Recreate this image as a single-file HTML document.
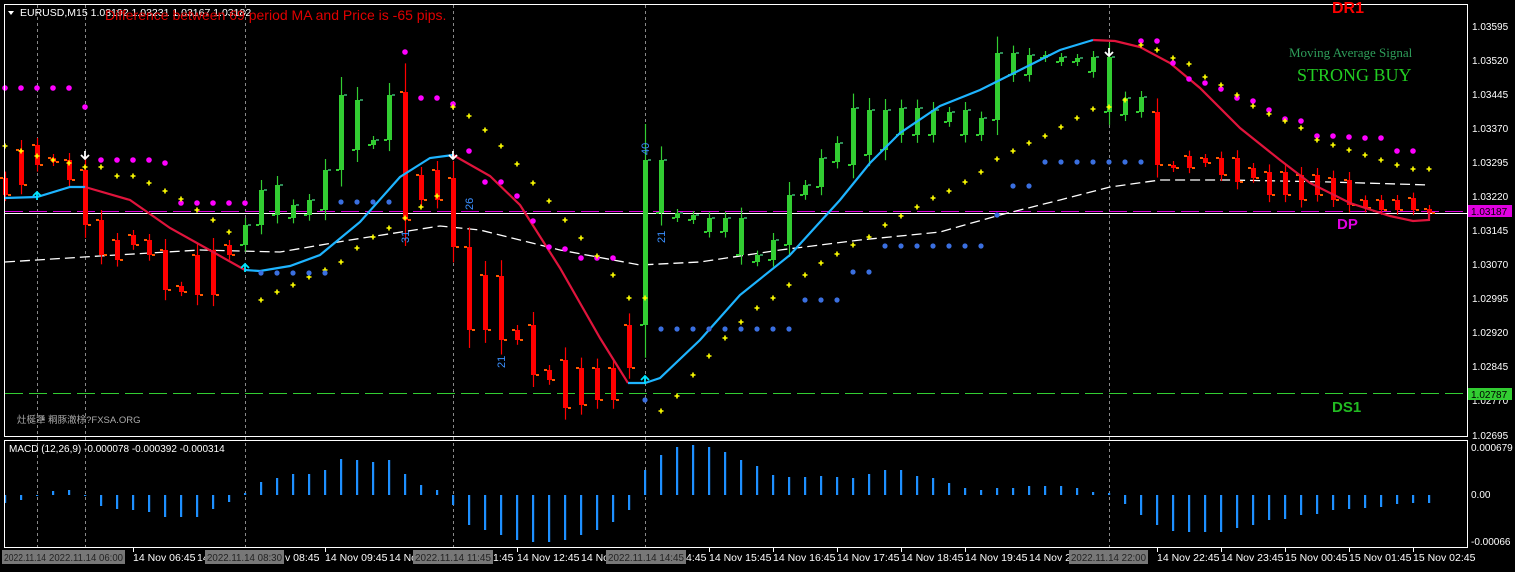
<!DOCTYPE html>
<html><head><meta charset="utf-8"><style>
html,body{margin:0;padding:0;background:#000;width:1515px;height:572px;overflow:hidden}
svg{display:block}
text{font-family:"Liberation Sans","Noto Sans CJK SC",sans-serif}
</style></head><body>
<svg id="s" width="1515" height="572" xmlns="http://www.w3.org/2000/svg">
<rect width="1515" height="572" fill="#000"/>
<g id="g"></g>
<rect x="4.5" y="4.5" width="1463" height="432" fill="none" stroke="#fff"/>
<rect x="4.5" y="440.5" width="1463" height="107" fill="none" stroke="#fff"/>
<g font-size="10" fill="#fff">
<text x="1472" y="30">1.03595</text><text x="1472" y="64">1.03520</text><text x="1472" y="98">1.03445</text>
<text x="1472" y="132">1.03370</text><text x="1472" y="166">1.03295</text><text x="1472" y="200">1.03220</text>
<text x="1472" y="234">1.03145</text><text x="1472" y="268">1.03070</text><text x="1472" y="302">1.02995</text>
<text x="1472" y="336">1.02920</text><text x="1472" y="370">1.02845</text><text x="1472" y="404">1.02770</text>
<text x="1472" y="439">1.02695</text>
<text x="1471" y="451">0.000679</text><text x="1471" y="498">0.00</text><text x="1471" y="545">-0.00066</text>
</g>
<rect x="1468" y="205" width="44" height="12" fill="#e000e0"/><text x="1471" y="215" font-size="10" fill="#000">1.03187</text>
<rect x="1468" y="388" width="44" height="12" fill="#32cd32"/><text x="1471" y="398" font-size="10" fill="#000">1.02787</text>
<path d="M8 11 L14 11 L11 15Z" fill="#fff"/>
<text x="20" y="16" font-size="10.5" fill="#fff">EURUSD,M15  1.03192 1.03231 1.03167 1.03182</text>
<text x="105" y="20" font-size="14" fill="#e00000">Difference between 69 period MA and Price is -65 pips.</text>
<text x="1289" y="57" font-size="13" fill="#2e9e5a" style="font-family:'Liberation Serif',serif">Moving Average Signal</text>
<text x="1297" y="81" font-size="18" fill="#22cc22" style="font-family:'Liberation Serif',serif">STRONG BUY</text>
<text x="1332" y="13" font-size="16" font-weight="bold" fill="#ff0000">DR1</text>
<text x="1337" y="229" font-size="15" font-weight="bold" fill="#e000e0">DP</text>
<text x="1332" y="412" font-size="15" font-weight="bold" fill="#22bb22">DS1</text>
<text x="17" y="423" font-size="9.5" fill="#aaa">灶梴犟 粡豚澈梌?FXSA.ORG</text>
<text x="9" y="452" font-size="10" fill="#fff">MACD (12,26,9) -0.000078 -0.000392 -0.000314</text>
<g font-size="11" fill="#3a8fff">
<text transform="translate(649,155) rotate(-90)">40</text>
<text transform="translate(665,243) rotate(-90)">21</text>
<text transform="translate(473,210) rotate(-90)">26</text>
<text transform="translate(505,368) rotate(-90)">21</text>
<text transform="translate(409,243) rotate(-90)">31</text>
</g>
<g id="ax" font-size="10.5" fill="#fff"></g>
</svg>
<script>
var NS="http://www.w3.org/2000/svg",g=document.getElementById('g');
function el(t,a,p){var e=document.createElementNS(NS,t);for(var k in a)e.setAttribute(k,a[k]);(p||g).appendChild(e);return e;}
function X(i){return 5+16*i;}
[37,85,245,453,645,1109].forEach(function(x){el('line',{x1:x+.5,y1:5,x2:x+.5,y2:548,stroke:'#888','stroke-dasharray':'3,3'});});
el('line',{x1:5,y1:211.5,x2:1467,y2:211.5,stroke:'#e000e0','stroke-dasharray':'18,6'});
el('line',{x1:5,y1:213.5,x2:1467,y2:213.5,stroke:'#fff'});
el('line',{x1:5,y1:393.5,x2:1467,y2:393.5,stroke:'#32cd32','stroke-dasharray':'18,6'});
el('polyline',{points:"5,262 100,256 200,250 280,252 350,240 440,226 480,230 560,250 640,265 700,262 780,250 860,240 940,232 1000,215 1060,200 1110,187 1160,180 1230,180 1330,182 1430,185",fill:'none',stroke:'#fff','stroke-width':1.3,'stroke-dasharray':'10,5'});
var C=[[178,195,'r'],[150,185,'r'],[145,165,'r'],[158,162,'r'],[160,180,'r'],[170,225,'r'],[220,255,'r'],[240,260,'r'],[235,245,'r'],[240,255,'r'],[250,290,'r'],[286,292,'r'],[255,295,'r'],[250,295,'r'],[245,255,'r'],[245,225,'g'],[225,190,'g'],[215,185,'g'],[218,205,'g'],[215,200,'g'],[210,170,'g'],[170,95,'g'],[150,100,'g'],[145,140,'g'],[140,95,'g'],[92,220,'r'],[175,200,'r'],[170,200,'r'],[178,247,'r'],[247,330,'r'],[275,330,'r'],[276,340,'r'],[330,340,'r'],[325,375,'r'],[370,380,'r'],[360,408,'r'],[368,405,'r'],[368,400,'r'],[368,400,'r'],[325,368,'r'],[325,160,'g'],[213,160,'g'],[218,213,'g'],[220,215,'g'],[232,218,'g'],[232,218,'g'],[255,218,'g'],[262,255,'g'],[260,240,'g'],[245,195,'g'],[195,185,'g'],[187,158,'g'],[162,143,'g'],[165,108,'g'],[155,110,'g'],[150,110,'g'],[135,108,'g'],[135,108,'g'],[135,110,'g'],[122,112,'g'],[135,110,'g'],[135,118,'g'],[120,53,'g'],[75,53,'g'],[75,55,'g'],[58,55,'g'],[62,57,'g'],[62,58,'g'],[72,57,'g'],[112,57,'g'],[115,98,'g'],[112,97,'g'],[112,165,'r'],[165,168,'r'],[156,168,'r'],[158,163,'r'],[158,175,'r'],[158,182,'r'],[168,178,'r'],[172,195,'r'],[172,195,'r'],[175,200,'r'],[175,195,'r'],[178,200,'r'],[180,205,'r'],[200,208,'r'],[200,210,'r'],[200,210,'r'],[198,210,'r'],[209,213,'r']];
C.forEach(function(c,i){var x=X(i),t=Math.min(c[0],c[1]),b=Math.max(c[0],c[1]),col=c[2]=='r'?'#ff0000':'#32cd32';
 var w1=Math.max(4,(b-t)*0.2+3),w2=Math.max(4,(b-t)*0.18+3);
 el('line',{x1:x+.5,y1:t-w1,x2:x+.5,y2:b+w2,stroke:col,'stroke-width':1.2});
 el('rect',{x:x-2,y:t,width:5,height:Math.max(2,b-t),fill:col});
 el('rect',{x:x-5,y:c[0]-1,width:3,height:2,fill:c[2]=='r'?'#ff5a00':'#32cd32'});
 el('rect',{x:x+3,y:c[1]-1,width:3,height:2,fill:c[2]=='r'?'#ff5a00':'#2e8b57'});
});
function pl(p,col){el('polyline',{points:p,fill:'none',stroke:col,'stroke-width':2.2});}
pl("5,198 37,197 70,187 85,187",'#1eb4ff');
pl("85,187 130,200 170,228 213,252 245,270",'#e0143c');
pl("245,270 260,271 290,266 320,255 360,222 400,177 430,158 453,155",'#1eb4ff');
pl("453,155 490,176 520,205 560,268 600,338 628,383",'#e0143c');
pl("628,383 645,383 660,378 700,340 740,295 790,255 840,200 870,163 900,133 940,106 980,90 1020,70 1060,50 1093,40",'#1eb4ff');
pl("1093,40 1115,41 1140,47 1170,63 1200,88 1240,128 1280,160 1310,183 1350,203 1390,216 1413,221 1429,220 1429,211",'#e0143c');
function dots(arr,col,r){arr.forEach(function(d){el('circle',{cx:d[0],cy:d[1],r:r,fill:col});});}
dots([[5,88],[21,88],[37,88],[53,88],[69,88],[85,107],[101,160],[117,160],[133,160],[149,160],[165,163],[181,203],[197,203],[213,203],[229,203],[245,203],[405,52],[421,98],[437,98],[453,104],[469,151],[485,182],[501,182],[517,196],[533,221],[549,247],[565,249],[581,258],[597,258],[613,258],[1141,41],[1157,41],[1173,63],[1189,79],[1205,83],[1221,89],[1237,98],[1253,101],[1269,110],[1285,119],[1301,121],[1317,136],[1333,136],[1349,137],[1365,138],[1381,138],[1397,151],[1413,151]],'#ff00ff',2.8);
var Y=[[5,146],[21,151],[37,156],[53,160],[69,163],[85,167],[101,167],[117,176],[133,176],[149,183],[165,191],[181,199],[197,210],[213,220],[229,232],[261,300],[277,292],[293,285],[309,277],[325,270],[341,262],[357,248],[373,237],[389,228],[405,218],[421,207],[437,196],[453,107],[469,116],[485,130],[501,146],[517,164],[533,183],[549,201],[565,220],[581,238],[597,256],[613,275],[629,298],[645,298],[661,411],[677,396],[693,375],[709,356],[725,338],[741,322],[757,308],[773,298],[789,285],[805,275],[821,263],[837,254],[853,245],[869,237],[885,225],[901,216],[917,207],[933,198],[949,191],[965,182],[981,172],[997,159],[1013,151],[1029,143],[1045,136],[1061,127],[1077,118],[1093,109],[1109,107],[1125,100],[1141,45],[1157,50],[1173,58],[1189,64],[1205,77],[1221,85],[1237,95],[1253,106],[1269,114],[1285,121],[1301,128],[1317,140],[1333,145],[1349,150],[1365,155],[1381,160],[1397,165],[1413,169],[1429,169]];
Y.forEach(function(d){el('path',{d:'M'+(d[0]-2.5)+' '+d[1]+'h5M'+d[0]+' '+(d[1]-2.5)+'v5',stroke:'#ffff00','stroke-width':1.6});});
var B=[];[261,277,293,309,325].forEach(function(x){B.push([x,273]);});[341,357,373,389].forEach(function(x){B.push([x,202]);});
B.push([645,400]);for(var x=661;x<=789;x+=16)B.push([x,329]);[805,821,837].forEach(function(x){B.push([x,300]);});[853,869].forEach(function(x){B.push([x,272]);});
for(x=885;x<=981;x+=16)B.push([x,246]);B.push([997,215]);[1013,1029].forEach(function(x){B.push([x,186]);});for(x=1045;x<=1141;x+=16)B.push([x,162]);
dots(B,'#3a6fe0',2.6);
function arr(x,y,up,col){var d=up?'M'+x+' '+(y+8)+'V'+y+'M'+(x-4)+' '+(y+4)+'L'+x+' '+y+'L'+(x+4)+' '+(y+4):'M'+x+' '+(y-8)+'V'+y+'M'+(x-4)+' '+(y-4)+'L'+x+' '+y+'L'+(x+4)+' '+(y-4);el('path',{d:d,stroke:col,'stroke-width':1.8,fill:'none'});}
arr(85,159,0,'#fff');arr(453,159,0,'#fff');arr(1109,56,0,'#fff');
arr(37,192,1,'#00e5ff');arr(245,264,1,'#00e5ff');arr(645,376,1,'#00e5ff');
var M=[8,5,1,-4,-5,1,11,14,15,17,22,22,22,14,7,-2,-13,-17,-21,-21,-25,-36,-35,-33,-35,-21,-10,-5,10,30,35,40,45,47,47,45,40,35,27,15,-25,-40,-48,-50,-48,-43,-35,-29,-20,-18,-18,-19,-18,-17,-21,-25,-25,-19,-17,-12,-7,-5,-7,-7,-9,-9,-9,-7,-3,-2,9,20,30,36,37,37,37,33,30,25,24,20,19,15,14,13,12,9,8,8];
M.forEach(function(h,i){var x=X(i);el('rect',{x:x-1,y:h<0?495+h:495,width:2.2,height:Math.max(1,Math.abs(h)),fill:'#1e90ff'});});
var ax=document.getElementById('ax');
function tx(x,t){el('text',{x:x,y:561},ax).textContent=t;}
function bx(x,w,t){el('rect',{x:x,y:550,width:w,height:14,fill:'#777'},ax);var e=el('text',{x:x+2,y:561,fill:'#222',textLength:w-4,lengthAdjust:'spacingAndGlyphs'},ax);e.textContent=t;}
[133,325,517,709,773,837,901,965,1157,1221,1285,1349,1413].forEach(function(x){el('line',{x1:x+.5,y1:548,x2:x+.5,y2:552,stroke:'#fff'},ax);});
tx(133,'14 Nov 06:45');tx(197,'14');tx(285,'v 08:45');tx(325,'14 Nov 09:45');tx(389,'14 No');tx(493,'1:45');tx(517,'14 Nov 12:45');tx(581,'14 No');tx(686,'4:45');
tx(709,'14 Nov 15:45');tx(773,'14 Nov 16:45');tx(837,'14 Nov 17:45');tx(901,'14 Nov 18:45');tx(965,'14 Nov 19:45');tx(1029,'14 Nov 2(');
tx(1157,'14 Nov 22:45');tx(1221,'14 Nov 23:45');tx(1285,'15 Nov 00:45');tx(1349,'15 Nov 01:45');tx(1413,'15 Nov 02:45');
bx(2,46,'2022.11.14');bx(47,78,'2022.11.14 06:00');bx(205,79,'2022.11.14 08:30');bx(413,80,'2022.11.14 11:45');bx(606,80,'2022.11.14 14:45');bx(1069,79,'2022.11.14 22:00');
</script>
</body></html>
